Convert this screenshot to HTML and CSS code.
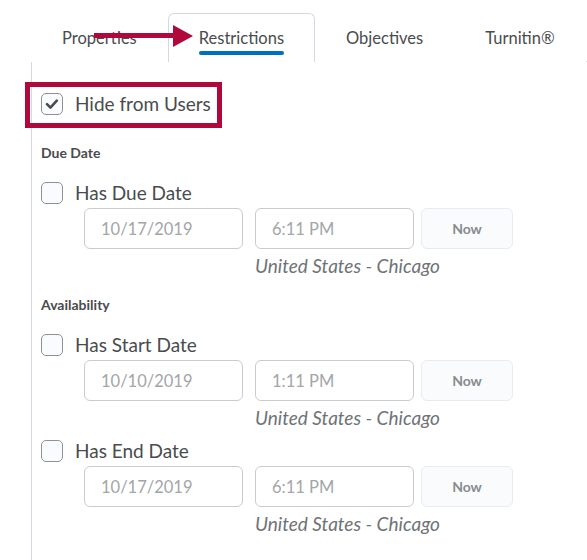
FILE: index.html
```html
<!DOCTYPE html>
<html lang="en">
<head>
<meta charset="utf-8">
<title>Restrictions</title>
<link rel="stylesheet" href="styles.css">
</head>
<body>
<div class="page">
  <div class="tabs">
    <div class="tab"><span class="tab-label">Properties</span><span class="tab-bar"></span></div>
    <div class="tab active"><span class="tab-label">Restrictions</span><span class="tab-bar"></span></div>
    <div class="tab"><span class="tab-label">Objectives</span><span class="tab-bar"></span></div>
    <div class="tab"><span class="tab-label">Turnitin®</span><span class="tab-bar"></span></div>
  </div>
  <div class="panel">
    <div class="check-row">
      <span class="box checked"><svg viewBox="0 0 22 22" width="22" height="22"><path d="M6 11.2 L9.4 14.6 L15.8 7.6" fill="none" stroke="#494c4e" stroke-width="2.6" stroke-linecap="round" stroke-linejoin="round"/></svg></span>
      <span class="check-text">Hide from Users</span>
    </div>

    <section class="group group-due">
      <div class="section-label">Due Date</div>
      <div class="item">
        <div class="check-row"><span class="box"></span><span class="check-text">Has Due Date</span></div>
        <div class="fields">
          <div class="field date">10/17/2019</div>
          <div class="field time">6:11 PM</div>
          <div class="now">Now</div>
        </div>
        <div class="tz">United States - Chicago</div>
      </div>
    </section>

    <section class="group group-avail">
      <div class="section-label">Availability</div>
      <div class="item">
        <div class="check-row"><span class="box"></span><span class="check-text">Has Start Date</span></div>
        <div class="fields">
          <div class="field date">10/10/2019</div>
          <div class="field time">1:11 PM</div>
          <div class="now">Now</div>
        </div>
        <div class="tz">United States - Chicago</div>
      </div>
      <div class="item item-next">
        <div class="check-row"><span class="box"></span><span class="check-text">Has End Date</span></div>
        <div class="fields">
          <div class="field date">10/17/2019</div>
          <div class="field time">6:11 PM</div>
          <div class="now">Now</div>
        </div>
        <div class="tz">United States - Chicago</div>
      </div>
    </section>
  </div>

  <svg class="arrow" viewBox="0 0 99 22" width="99" height="22" aria-hidden="true">
    <rect x="0" y="8" width="81" height="5" fill="#b0083b"/>
    <polygon points="79,0 99,11 79,22" fill="#b0083b"/>
  </svg>
  <div class="callout"></div>
</div>
</body>
</html>
```
FILE: styles.css
```css
html, body {
  margin: 0;
  padding: 0;
  background: #ffffff;
}

body {
  font-family: Lato, "Noto Sans", sans-serif;
  color: #494c4e;
}

.page {
  position: relative;
  width: 587px;
  height: 560px;
  overflow: hidden;
}

.tabs {
  display: flex;
  margin-left: 31px;
  padding-top: 13px;
  border-bottom: 1px solid #d3d9e3;
}

.tab {
  display: flex;
  flex-direction: column;
  align-items: stretch;
  padding: 14px 30px 7px;
  border: 1px solid transparent;
  border-bottom: none;
  border-radius: 6px 6px 0 0;
  margin-bottom: -1px;
  background: #ffffff;
}

.tab.active {
  border-color: #d3d9e3;
}

.tab-label {
  font-size: 16.5px;
  line-height: 20px;
  white-space: nowrap;
  color: #494c4e;
}

.tab-bar {
  display: block;
  height: 4px;
  margin-top: 3px;
  border-radius: 2px;
  background: transparent;
}

.tab.active .tab-bar {
  background: #006fbf;
}

.panel {
  margin-left: 31px;
  border-left: 1px solid #d3d9e3;
  padding: 30px 0 0 9px;
  box-sizing: border-box;
  min-height: 498px;
}

.check-row {
  display: flex;
  align-items: center;
  height: 23px;
}

.box {
  box-sizing: border-box;
  width: 22px;
  height: 22px;
  border: 1px solid #8d9296;
  border-radius: 5px;
  background: #f9fbff;
  display: flex;
  align-items: center;
  justify-content: center;
  flex: none;
}

.box svg {
  display: block;
  margin: -1px;
}

.check-text {
  margin-left: 12px;
  font-size: 19px;
  line-height: 23px;
  white-space: nowrap;
}

.group-due {
  margin-top: 29px;
}

.group-avail {
  margin-top: 18px;
}

.section-label {
  font-size: 14px;
  font-weight: 700;
  line-height: 17px;
  margin-bottom: 20px;
}

.item-next {
  margin-top: 9px;
}

.fields {
  display: flex;
  margin: 4px 0 0 43px;
}

.field {
  box-sizing: border-box;
  width: 159px;
  height: 41px;
  border: 1px solid #c8ccd0;
  border-radius: 6px;
  padding-left: 16px;
  display: flex;
  align-items: center;
  font-size: 16.5px;
  color: #a2a6a9;
  background: #ffffff;
}

.date {
  margin-right: 12px;
}

.time {
  margin-right: 7px;
}

.now {
  box-sizing: border-box;
  width: 92px;
  height: 41px;
  border: 1px solid #e8ecf1;
  border-radius: 6px;
  background: #fafbfd;
  display: flex;
  align-items: center;
  justify-content: center;
  font-size: 14px;
  font-weight: 700;
  color: #868c8f;
}

.tz {
  margin: 5px 0 0 214px;
  padding-left: 0;
  font-size: 19px;
  font-style: italic;
  line-height: 24px;
  color: #6e7376;
  white-space: nowrap;
}

.arrow {
  position: absolute;
  left: 94px;
  top: 25px;
  display: block;
}

.callout {
  position: absolute;
  left: 25px;
  top: 82px;
  width: 197px;
  height: 46px;
  box-sizing: border-box;
  border: 5px solid #b0083b;
}
```
